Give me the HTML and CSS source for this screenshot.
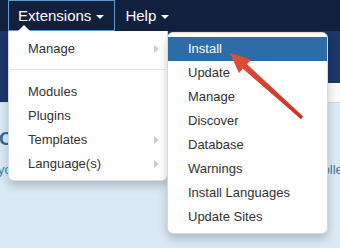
FILE: index.html
```html
<!DOCTYPE html>
<html lang="en">
<head>
    <meta charset="UTF-8">
    <title>Extensions menu</title>
    <link rel="stylesheet" href="styles.css">
</head>
<body>
    <nav class="navbar">
        <ul class="nav">
            <li class="nav-item open">
                <a class="nav-link" href="#">Extensions <span class="caret"></span></a>
                <ul class="dropdown-menu">
                    <li class="has-sub">
                        <a href="#">Manage</a>
                        <ul class="dropdown-menu submenu">
                            <li class="active"><a href="#">Install</a></li>
                            <li><a href="#">Update</a></li>
                            <li><a href="#">Manage</a></li>
                            <li><a href="#">Discover</a></li>
                            <li><a href="#">Database</a></li>
                            <li><a href="#">Warnings</a></li>
                            <li><a href="#">Install Languages</a></li>
                            <li><a href="#">Update Sites</a></li>
                        </ul>
                    </li>
                    <li class="divider"></li>
                    <li><a href="#">Modules</a></li>
                    <li><a href="#">Plugins</a></li>
                    <li class="has-sub"><a href="#">Templates</a></li>
                    <li class="has-sub"><a href="#">Language(s)</a></li>
                </ul>
            </li>
            <li class="nav-item">
                <a class="nav-link" href="#">Help <span class="caret"></span></a>
            </li>
        </ul>
    </nav>

    <header class="header"></header>

    <div class="subhead">
        <div class="subhead-side"></div>
    </div>

    <main class="content">
        <div class="alert">
            <h2>Cont</h2>
            <p class="alert-line">
                <span>you</span>
                <span>controlled</span>
            </p>
        </div>
    </main>

    <!-- red pointer drawn over the menu -->
    <svg class="pointer" width="340" height="248" viewBox="0 0 340 248">
        <defs>
            <linearGradient id="arrowFill" x1="302" y1="118" x2="230" y2="53" gradientUnits="userSpaceOnUse">
                <stop offset="0" stop-color="#c9321f"/>
                <stop offset="1" stop-color="#e2503a"/>
            </linearGradient>
        </defs>
        <polygon fill="url(#arrowFill)" points="230,53 251,59.8 247,64.2 303.2,116.6 301,119.2 242.6,68.6 239,73.2"/>
    </svg>
</body>
</html>
```

FILE: styles.css
```css
* {
    margin: 0;
    padding: 0;
    box-sizing: border-box;
}

body {
    font-family: "Liberation Sans", Arial, sans-serif;
    background-color: #d9eaf5;
    color: #333;
    width: 340px;
    height: 248px;
    overflow: hidden;
    position: relative;
}

ul {
    list-style: none;
}

a {
    text-decoration: none;
    color: inherit;
}

/* top bar */
.navbar {
    height: 31px;
    background-color: #11203c;
    padding-left: 8px;
}

.nav {
    display: flex;
    height: 100%;
}

.nav-item {
    position: relative;
    height: 100%;
}

.nav-link {
    display: flex;
    align-items: center;
    height: 100%;
    padding: 0 10px 0 9px;
    font-size: 15px;
    color: #fff;
    border: 1.5px solid transparent;
}

.open > .nav-link {
    border-color: #5d9ad3;
}

.caret {
    display: inline-block;
    width: 0;
    height: 0;
    margin-left: 5px;
    margin-top: 2px;
    border-top: 4px solid #fff;
    border-left: 4px solid transparent;
    border-right: 4px solid transparent;
}

/* page under the bar */
.header {
    height: 52px;
    background-color: #1b3869;
}

.subhead {
    height: 20px;
    background: linear-gradient(to right, #ececec, #fafafa);
    border-bottom: 1px solid #c9dcea;
}

.subhead-side {
    width: 8px;
    height: 100%;
    background-color: #1b3869;
}

.content {
    padding-top: 24px;
}

.alert h2 {
    font-size: 19px;
    color: #2c6a9a;
    margin-left: -1px;
    line-height: 24px;
}

.alert-line {
    display: flex;
    justify-content: space-between;
    width: 352px;
    margin-top: 11px;
    margin-left: -2px;
    font-size: 13px;
    line-height: 16px;
    color: #3a7bab;
}

/* dropdowns */
.dropdown-menu {
    position: absolute;
    top: 100%;
    left: 0;
    width: 160px;
    padding: 5px 0;
    background-color: #fff;
    border: 1px solid rgba(0, 0, 0, 0.15);
    border-top: none;
    border-radius: 0 0 6px 6px;
    box-shadow: 0 5px 10px rgba(0, 0, 0, 0.2);
    z-index: 10;
}

.nav-item > .dropdown-menu::before {
    content: "";
    position: absolute;
    top: -6px;
    left: 9px;
    border-bottom: 6px solid #fff;
    border-left: 6px solid transparent;
    border-right: 6px solid transparent;
}

.dropdown-menu li {
    position: relative;
}

.dropdown-menu li > a {
    display: block;
    height: 24px;
    line-height: 26px;
    padding-left: 19px;
    font-size: 13px;
    color: #333;
}

.has-sub > a::after {
    content: "";
    position: absolute;
    right: 8px;
    top: 9px;
    border-left: 5px solid #ccc;
    border-top: 4px solid transparent;
    border-bottom: 4px solid transparent;
}

.divider {
    height: 1px;
    margin: 9px 1px;
    background-color: #e5e5e5;
}

.submenu {
    top: -4px;
    left: 158px;
    width: 161px;
    padding: 4px 0;
    border-top: 1px solid rgba(0, 0, 0, 0.15);
    border-radius: 6px;
}

.submenu li > a {
    padding-left: 20px;
    line-height: 24px;
}

.submenu .active > a {
    background-color: #2d6ca6;
    color: #fff;
}

.pointer {
    position: absolute;
    top: 0;
    left: 0;
    z-index: 20;
}
```
